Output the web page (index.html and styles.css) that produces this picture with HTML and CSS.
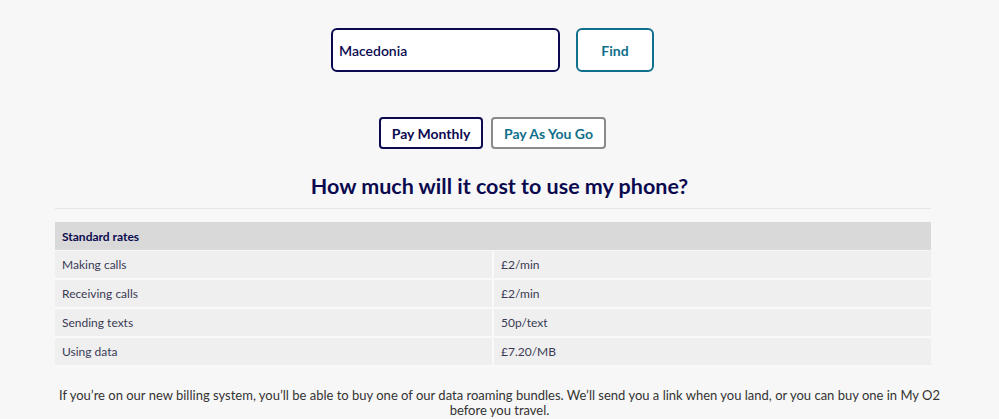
FILE: index.html
```html
<!DOCTYPE html>
<html lang="en">
  <head>
    <meta charset="UTF-8" />
    <meta name="viewport" content="width=device-width, initial-scale=1.0" />
    <title>Roaming charges</title>
    <link rel="stylesheet" href="styles.css">
  </head>
  <body>
    <div class="search">
      <input type="text" class="search-input" value="Macedonia" />
      <button class="find-btn">Find</button>
    </div>

    <div class="tabs">
      <button class="tab tab-active">Pay Monthly</button>
      <button class="tab tab-payg">Pay As You Go</button>
    </div>

    <h2 class="title">How much will it cost to use my phone?</h2>
    <div class="rule"></div>

    <table class="rates">
      <thead>
        <tr>
          <th colspan="2">Standard rates</th>
        </tr>
      </thead>
      <tbody>
        <tr>
          <td>Making calls</td>
          <td>£2/min</td>
        </tr>
        <tr>
          <td>Receiving calls</td>
          <td>£2/min</td>
        </tr>
        <tr>
          <td>Sending texts</td>
          <td>50p/text</td>
        </tr>
        <tr>
          <td>Using data</td>
          <td>£7.20/MB</td>
        </tr>
      </tbody>
    </table>

    <p class="note">
      If you’re on our new billing system, you’ll be able to buy one of our data
      roaming bundles. We’ll send you a link when you land, or you can buy one
      in My O2 before you travel.
    </p>
  </body>
</html>
```

FILE: styles.css
```css
:root {
  --navy: #0b0a4f;
  --teal: #0f6f8c;
  --page: #f7f7f7;
  --row: #efefef;
  --head: #d9d9d9;
}

body {
  margin: 0;
  padding: 28px 0 0;
  background-color: var(--page);
  font-family: "Lato", "Open Sans", sans-serif;
  color: #333;
}

/* Search */
.search {
  display: flex;
  justify-content: center;
  gap: 16px;
  padding-right: 14px;
}

.search-input {
  box-sizing: border-box;
  width: 229px;
  height: 44px;
  padding: 0 6px;
  border: 2px solid var(--navy);
  border-radius: 6px;
  background: #fff;
  font-family: inherit;
  font-size: 14px;
  font-weight: 600;
  color: var(--navy);
}

.find-btn {
  box-sizing: border-box;
  width: 78px;
  height: 44px;
  border: 2px solid var(--teal);
  border-radius: 6px;
  background: #fff;
  font-family: inherit;
  font-size: 14px;
  font-weight: 700;
  color: var(--teal);
}

/* Tabs */
.tabs {
  display: flex;
  justify-content: center;
  gap: 8px;
  margin-top: 45px;
  padding-right: 14px;
}

.tab {
  box-sizing: border-box;
  width: 104px;
  height: 32px;
  padding: 0;
  border: 2px solid #8a8a8a;
  border-radius: 4px;
  background: #fff;
  font-family: inherit;
  font-size: 14px;
  font-weight: 700;
  color: var(--teal);
}

.tab-payg {
  width: 115px;
}

.tab-active {
  border-color: var(--navy);
  color: var(--navy);
}

.title {
  margin: 25px 0 0;
  text-align: center;
  font-size: 21.5px;
  font-weight: 700;
  line-height: 24px;
  color: var(--navy);
}

.rule {
  height: 1px;
  margin: 10px 68px 0 55px;
  background: #e6e6e6;
}

/* Table */
.rates {
  width: 876px;
  margin: 13px 0 0 55px;
  border-collapse: collapse;
  font-size: 12px;
}

.rates th {
  height: 28px;
  padding: 0 7px;
  background: var(--head);
  text-align: left;
  font-weight: 700;
  color: var(--navy);
  border-bottom: 1px solid var(--page);
}

.rates td {
  width: 50%;
  height: 27px;
  padding: 0 7px;
  background: var(--row);
  color: #3a3a55;
  border-bottom: 2px solid #f9f9f9;
}

.rates td:first-child {
  border-right: 2px solid #f9f9f9;
}

.note {
  margin: 21px 50px 0;
  text-align: center;
  font-size: 13px;
  line-height: 15px;
  color: #333;
}
```
